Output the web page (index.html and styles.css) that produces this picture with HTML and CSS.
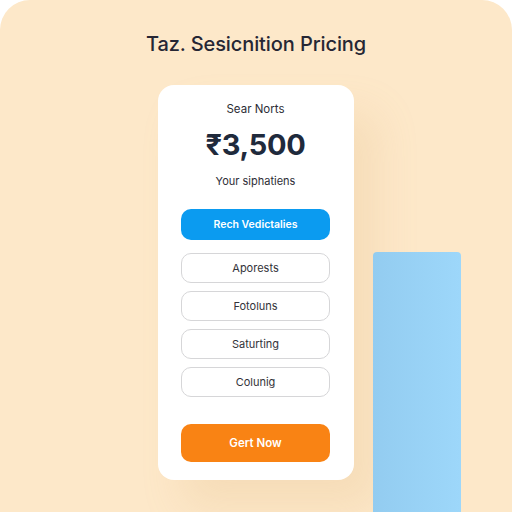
FILE: index.html
```html
<!DOCTYPE html>
<html>
<head>
<meta charset="utf-8">
<link rel="stylesheet" href="styles.css">
</head>
<body>
<div class="panel">
  <h1 class="title">Taz. Sesicnition Pricing</h1>
  <div class="row">
    <div class="side"></div>
    <div class="card">
      <div class="plan">Sear Norts</div>
      <div class="price">₹3,500</div>
      <div class="sub">Your siphatiens</div>
      <div class="btn primary">Rech Vedictalies</div>
      <div class="options">
        <div class="btn outline">Aporests</div>
        <div class="btn outline">Fotoluns</div>
        <div class="btn outline">Saturting</div>
        <div class="btn outline">Colunig</div>
      </div>
      <div class="btn cta">Gert Now</div>
    </div>
    <div class="side right"><div class="bar"></div></div>
  </div>
</div>
</body>
</html>
```
FILE: styles.css
```css
html, body {
  margin: 0;
  padding: 0;
  background: #ffffff;
  width: 512px;
  height: 512px;
  overflow: hidden;
  font-family: "Inter", "Open Sans", "Liberation Sans", sans-serif;
}
.panel {
  width: 512px;
  height: 512px;
  box-sizing: border-box;
  background: #fde8c9;
  border-radius: 30px 30px 0 0;
  padding-top: 32px;
  display: flex;
  flex-direction: column;
  overflow: hidden;
}
.title {
  margin: 0;
  font-size: 20px;
  line-height: 24px;
  font-weight: 500;
  color: #262634;
  text-align: center;
  letter-spacing: -0.1px;
}
.row {
  display: grid;
  grid-template-columns: 1fr 196px 1fr;
  margin-top: 29px;
  align-items: start;
}
.card {
  background: #ffffff;
  border-radius: 16px;
  padding: 16px 24px 18px 23px;
  display: flex;
  flex-direction: column;
  align-items: stretch;
  box-shadow: 24px 28px 40px rgba(214, 170, 110, 0.18);
}
.plan {
  font-size: 11.5px;
  line-height: 16px;
  color: #2d2d36;
  text-align: center;
}
.price {
  margin-top: 8px;
  font-size: 29px;
  line-height: 40px;
  font-weight: 700;
  color: #1f2a3c;
  text-align: center;
  letter-spacing: -0.3px;
}
.sub {
  margin-top: 8px;
  font-size: 11px;
  line-height: 16px;
  color: #2d2d36;
  text-align: center;
}
.btn {
  display: flex;
  align-items: center;
  justify-content: center;
  box-sizing: border-box;
  border-radius: 10px;
  font-size: 11px;
}
.primary {
  margin-top: 20px;
  height: 31px;
  background: #0b9bf0;
  color: #ffffff;
  font-weight: 600;
  font-size: 10.5px;
}
.options {
  margin-top: 13px;
  display: flex;
  flex-direction: column;
  gap: 8px;
}
.outline {
  height: 30px;
  border: 1px solid #d6d6d8;
  color: #333339;
  background: #ffffff;
}
.cta {
  margin-top: 27px;
  height: 38px;
  background: #f98314;
  color: #ffffff;
  font-weight: 600;
  font-size: 11.5px;
}
.right {
  display: flex;
  justify-content: flex-start;
}
.bar {
  margin-left: 19px;
  margin-top: 167px;
  width: 88px;
  height: 280px;
  border-radius: 4px 4px 0 0;
  background: linear-gradient(90deg, #93ccf0, #9dd7fa);
}
```
